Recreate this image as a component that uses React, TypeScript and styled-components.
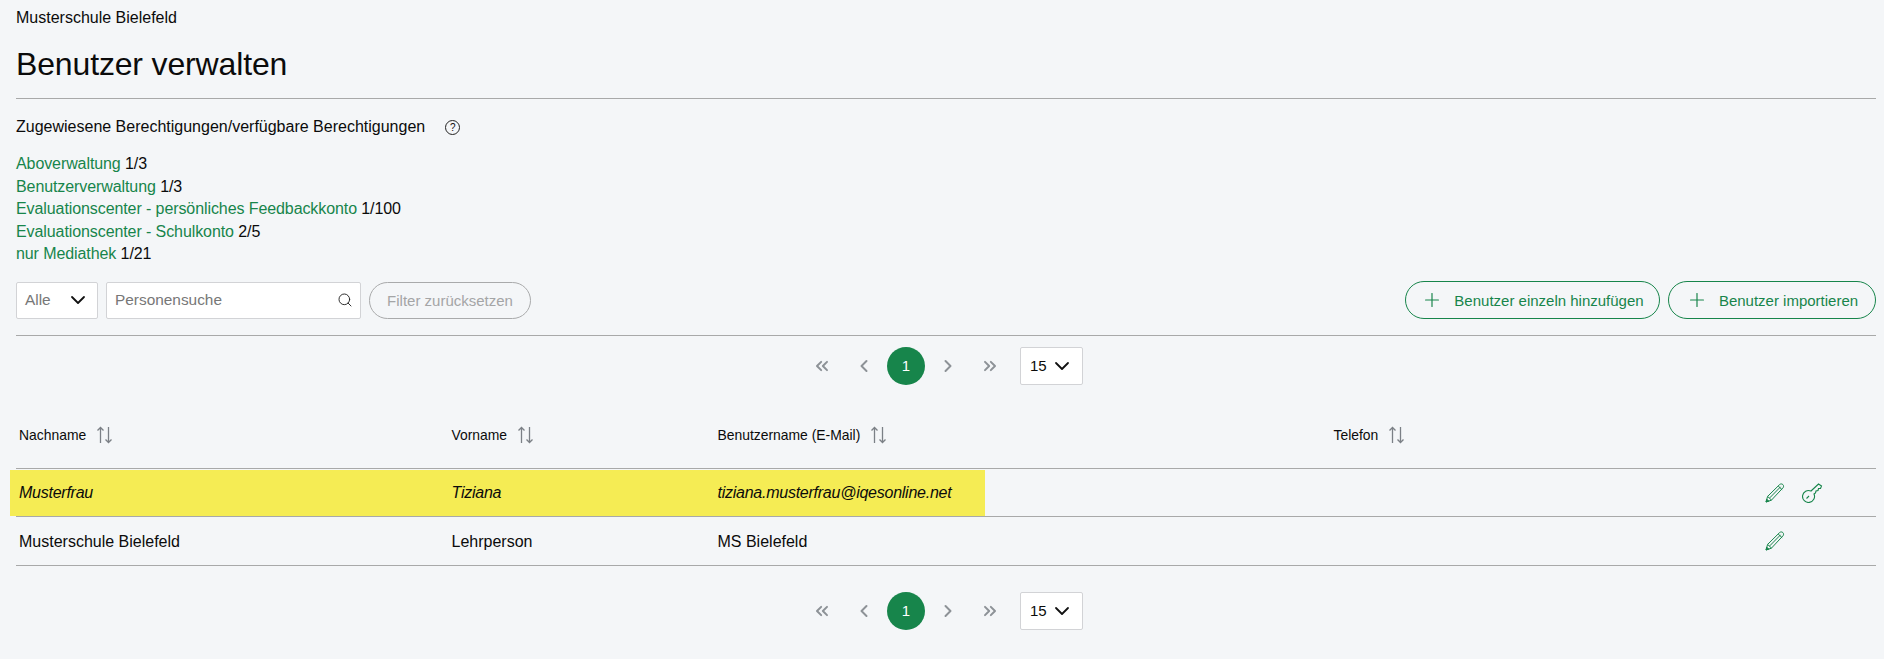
import React from 'react';
import styled, { createGlobalStyle } from 'styled-components';
import {
  ChevronDown,
  ChevronLeft,
  ChevronRight,
  ChevronsLeft,
  ChevronsRight,
  Plus,
  Search,
} from 'lucide-react';

const GREEN = '#17854b';
const LINE = '#a8a9a9';

const GlobalStyle = createGlobalStyle`
  html, body {
    margin: 0;
    background: #f4f6f8;
    color: #0b0b0b;
    font-family: "Liberation Sans", Arial, sans-serif;
  }
`;

const Page = styled.div`
  padding: 9px 8px 0 16px;
  height: 650px;
  overflow: hidden;
`;

const School = styled.div`
  font-size: 16px;
  line-height: 18px;
`;

const Title = styled.h1`
  margin: 17px 0 0;
  padding-bottom: 14px;
  font-size: 32px;
  line-height: 40px;
  font-weight: 400;
  letter-spacing: -0.15px;
  border-bottom: 1px solid ${LINE};
`;

const PermissionsHead = styled.div`
  display: flex;
  align-items: center;
  gap: 20px;
  margin-top: 18px;
  font-size: 16px;
  line-height: 20px;
`;

const HelpIcon = styled.span`
  display: inline-flex;
  align-items: center;
  justify-content: center;
  box-sizing: border-box;
  width: 15px;
  height: 15px;
  margin-top: 1px;
  border: 1px solid #222;
  border-radius: 50%;
  font-size: 10px;
`;

const PermissionList = styled.ul`
  list-style: none;
  margin: 16px 0 0;
  padding: 0;
  font-size: 16px;
  line-height: 22.5px;
  letter-spacing: -0.09px;
`;

const PermissionLink = styled.span`
  color: ${GREEN};
`;

const Toolbar = styled.div`
  display: flex;
  align-items: center;
  height: 37px;
  margin-top: 16px;
  padding-bottom: 16px;
  border-bottom: 1px solid ${LINE};
`;

const Field = styled.div<{ $width: number }>`
  display: flex;
  align-items: center;
  justify-content: space-between;
  box-sizing: border-box;
  width: ${(p) => p.$width}px;
  height: 37px;
  padding: 0 7px 0 8px;
  margin-right: 8px;
  background: #fff;
  border: 1px solid #d2d3d6;
  border-radius: 2px;
  font-size: 15.4px;
  color: #777;
`;

const ResetButton = styled.div`
  display: flex;
  align-items: center;
  justify-content: center;
  box-sizing: border-box;
  width: 162px;
  height: 37px;
  border: 1px solid #a9aaab;
  border-radius: 19px;
  font-size: 15px;
  color: #a4a5a6;
`;

const Actions = styled.div`
  display: flex;
  gap: 8px;
  margin-left: auto;
`;

const ActionButton = styled.button<{ $width: number }>`
  display: flex;
  align-items: center;
  justify-content: center;
  gap: 11px;
  box-sizing: border-box;
  width: ${(p) => p.$width}px;
  height: 38px;
  padding: 0;
  background: transparent;
  border: 1px solid ${GREEN};
  border-radius: 19px;
  color: ${GREEN};
  font-family: inherit;
  font-size: 15px;
`;

const PagerBar = styled.div<{ $top: number }>`
  display: flex;
  align-items: center;
  justify-content: center;
  height: 38px;
  margin-top: ${(p) => p.$top}px;
  padding-right: 8px;
`;

const PagerArrow = styled.span`
  display: flex;
  justify-content: center;
  width: 42px;
  color: #8d9297;
`;

const PageDot = styled.span`
  display: flex;
  align-items: center;
  justify-content: center;
  width: 38px;
  height: 38px;
  margin: 0 2px;
  border-radius: 50%;
  background: ${GREEN};
  color: #fff;
  font-size: 15px;
`;

const SizeSelect = styled.div`
  display: flex;
  align-items: center;
  justify-content: space-between;
  box-sizing: border-box;
  width: 63px;
  height: 38px;
  margin-left: 9px;
  padding: 0 8px 0 9px;
  background: #fff;
  border: 1px solid #d2d3d6;
  border-radius: 2px;
  font-size: 15px;
`;

const COLUMNS = '432.5px 266px 616px 1fr 110px';

const HeaderRow = styled.div`
  display: grid;
  grid-template-columns: ${COLUMNS};
  align-items: center;
  height: 48px;
  margin-top: 26px;
  padding-bottom: 9px;
  border-bottom: 1px solid ${LINE};
  font-size: 13.9px;
`;

const HeaderCell = styled.div`
  display: flex;
  align-items: center;
  gap: 10px;
  padding-left: 3px;
`;

const Row = styled.div`
  position: relative;
  display: grid;
  grid-template-columns: ${COLUMNS};
  align-items: center;
  height: 47.5px;
  border-bottom: 1px solid ${LINE};
  font-size: 16px;
`;

const Highlight = styled.div`
  position: absolute;
  left: -6px;
  top: 1px;
  bottom: 0;
  width: 975px;
  background: #f5ec54;
`;

const Cell = styled.div<{ $italic?: boolean }>`
  position: relative;
  padding: 2px 0 0 3px;
  font-style: ${(p) => (p.$italic ? 'italic' : 'normal')};
  letter-spacing: ${(p) => (p.$italic ? '-0.25px' : '0')};
`;

const RowIcons = styled.div`
  display: flex;
  gap: 17px;
  margin: 1px 0 0 -1px;
`;

const SortIcon = () => (
  <svg width="17" height="18" viewBox="0 0 17 18" fill="none" stroke="#7b8086" strokeWidth="1.3">
    <path d="M4.5 17V1.5M1.5 4.5l3-3 3 3M12.5 1v15.5M9.5 13.5l3 3 3-3" />
  </svg>
);

const PencilIcon = () => (
  <svg width="20" height="20" viewBox="0 0 20 20" fill="none" stroke={GREEN} strokeWidth="1">
    <path d="M1 19l1.6-5.6L14.6 1.6c.9-.9 2.4-.9 3.3 0s.9 2.4 0 3.3L6.4 17.2z" />
    <path d="M2.6 13.4l4 3.8M4.7 14.9L15.6 3.8M13.2 3l4 3.8" />
    <path d="M1 19l2.8-.8-2-2z" fill={GREEN} />
  </svg>
);

const KeyIcon = () => (
  <svg width="21" height="20" viewBox="0 0 21 20" fill="none" stroke={GREEN} strokeWidth="1.1">
    <path d="M9 8L16.5 1l3 2-1 2.5h-2L16 7.5l-2 .5-.5 2L12 11A6 6 0 1 1 9 8z" />
    <path d="M4.500 15.500l2.500-2.500" />
  </svg>
);

const Pager = ({ top }: { top: number }) => (
  <PagerBar $top={top}>
    <PagerArrow><ChevronsLeft size={20} strokeWidth={2.4} /></PagerArrow>
    <PagerArrow><ChevronLeft size={20} strokeWidth={2.4} /></PagerArrow>
    <PageDot>1</PageDot>
    <PagerArrow><ChevronRight size={20} strokeWidth={2.4} /></PagerArrow>
    <PagerArrow><ChevronsRight size={20} strokeWidth={2.4} /></PagerArrow>
    <SizeSelect>
      15
      <ChevronDown size={24} color="#111" strokeWidth={1.8} />
    </SizeSelect>
  </PagerBar>
);

const permissions = [
  ['Aboverwaltung', '1/3'],
  ['Benutzerverwaltung', '1/3'],
  ['Evaluationscenter - persönliches Feedbackkonto', '1/100'],
  ['Evaluationscenter - Schulkonto', '2/5'],
  ['nur Mediathek', '1/21'],
];

const headers = ['Nachname', 'Vorname', 'Benutzername (E-Mail)', 'Telefon'];

export default function App() {
  return (
    <Page>
      <GlobalStyle />
      <School>Musterschule Bielefeld</School>
      <Title>Benutzer verwalten</Title>

      <PermissionsHead>
        Zugewiesene Berechtigungen/verfügbare Berechtigungen
        <HelpIcon>?</HelpIcon>
      </PermissionsHead>
      <PermissionList>
        {permissions.map(([name, count]) => (
          <li key={name}>
            <PermissionLink>{name}</PermissionLink> {count}
          </li>
        ))}
      </PermissionList>

      <Toolbar>
        <Field $width={82}>
          Alle
          <ChevronDown size={24} color="#111" strokeWidth={1.8} />
        </Field>
        <Field $width={255}>
          Personensuche
          <Search size={16} color="#222" strokeWidth={1.4} />
        </Field>
        <ResetButton>Filter zurücksetzen</ResetButton>
        <Actions>
          <ActionButton $width={255}>
            <Plus size={22} strokeWidth={1.3} />
            Benutzer einzeln hinzufügen
          </ActionButton>
          <ActionButton $width={208}>
            <Plus size={22} strokeWidth={1.3} />
            Benutzer importieren
          </ActionButton>
        </Actions>
      </Toolbar>

      <Pager top={11} />

      <HeaderRow>
        {headers.map((h) => (
          <HeaderCell key={h}>
            {h}
            <SortIcon />
          </HeaderCell>
        ))}
      </HeaderRow>

      <Row>
        <Highlight />
        <Cell $italic>Musterfrau</Cell>
        <Cell $italic>Tiziana</Cell>
        <Cell $italic>tiziana.musterfrau@iqesonline.net</Cell>
        <Cell />
        <RowIcons>
          <PencilIcon />
          <KeyIcon />
        </RowIcons>
      </Row>
      <Row>
        <Cell>Musterschule Bielefeld</Cell>
        <Cell>Lehrperson</Cell>
        <Cell>MS Bielefeld</Cell>
        <Cell />
        <RowIcons>
          <PencilIcon />
        </RowIcons>
      </Row>

      <Pager top={26} />
    </Page>
  );
}
